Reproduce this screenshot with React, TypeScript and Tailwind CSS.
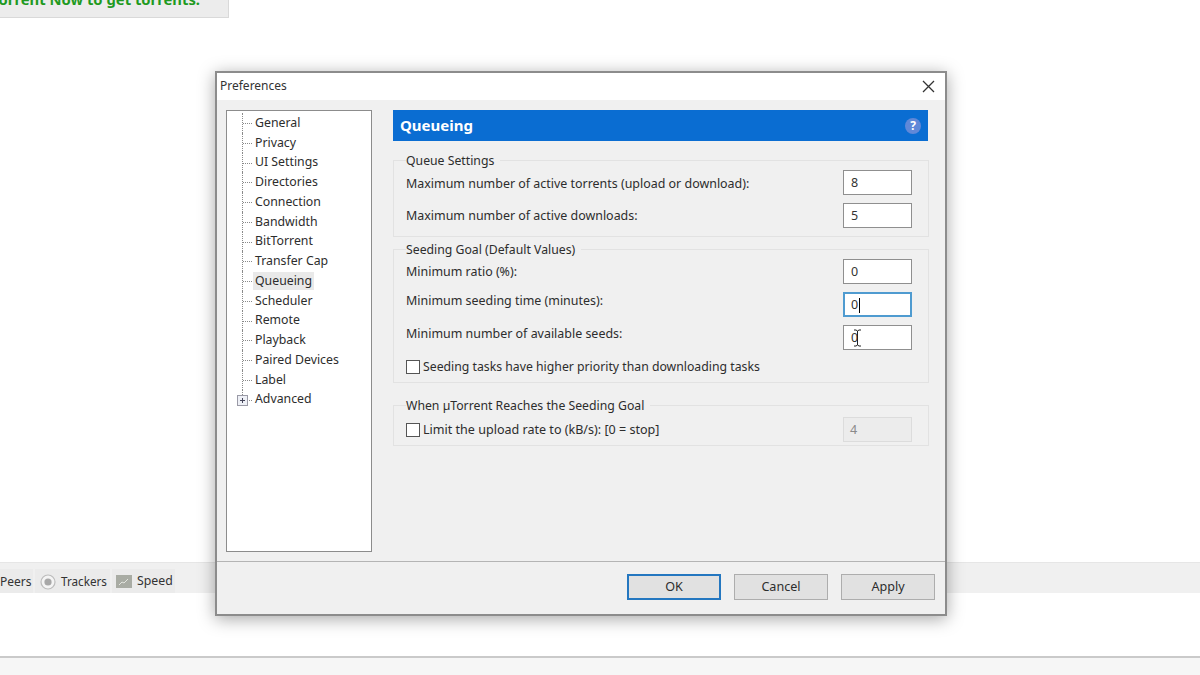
const font = "font-['Noto_Sans','Open_Sans',sans-serif]";

const treeItems = [
  "General",
  "Privacy",
  "UI Settings",
  "Directories",
  "Connection",
  "Bandwidth",
  "BitTorrent",
  "Transfer Cap",
  "Queueing",
  "Scheduler",
  "Remote",
  "Playback",
  "Paired Devices",
  "Label",
  "Advanced",
];

const TreeRow = ({ label, index }: { label: string; index: number }) => {
  const last = index === treeItems.length - 1;
  return (
    <div className="flex h-[19.75px] items-center">
      <div className="relative h-full w-[26px] shrink-0">
        <div className={`absolute left-[15px] top-0 w-px border-l border-dotted border-[#8a8a8a] ${last ? "h-1/2" : "h-full"}`} />
        <div className="absolute left-[16px] top-[10px] w-[9px] border-t border-dotted border-[#8a8a8a]" />
        {last && (
          <svg className="absolute left-[10px] top-[5px]" width="11" height="11" viewBox="0 0 11 11">
            <rect x="0.5" y="0.5" width="10" height="10" fill="#eef0f6" stroke="#9a9aa6" />
            <path d="M3 5.5h5M5.5 3v5" stroke="#45455a" />
          </svg>
        )}
      </div>
      <span className={`px-[2px] text-[12.3px] leading-[18px] text-[#2d2d2d] ${label === "Queueing" ? "bg-[#e9e9e9]" : ""}`}>
        {label}
      </span>
    </div>
  );
};

const ValueBox = ({ value, focused, disabled, children }: { value: string; focused?: boolean; disabled?: boolean; children?: React.ReactNode }) => (
  <div
    className={`relative flex h-[25px] w-[69px] shrink-0 items-center pt-px text-[12.5px] ${
      disabled
        ? "border border-[#dcdcdc] bg-[#ececec] pl-[6px] text-[#8a8a8a]"
        : focused
          ? "border-2 border-[#4f9bd0] bg-white pl-[6px] text-[#333]"
          : "border border-[#8f8f8f] bg-white pl-[7px] text-[#333]"
    }`}
  >
    {value}
    {children}
  </div>
);

const SettingRow = ({ label, labelClass, children }: { label: string; labelClass: string; children: React.ReactNode }) => (
  <div className="flex items-center justify-between pl-[12px] pr-[16px]">
    <span className={`text-[12.45px] text-[#2d2d2d] ${labelClass}`}>{label}</span>
    {children}
  </div>
);

const Check = ({ label, textClass }: { label: string; textClass: string }) => (
  <div className="flex items-center gap-[3px]">
    <div className="h-[14px] w-[14px] shrink-0 border border-[#555] bg-white" />
    <span className={`leading-[18px] text-[#2d2d2d] ${textClass}`}>{label}</span>
  </div>
);

const Group = ({ title, className, children }: { title: string; className: string; children: React.ReactNode }) => (
  <fieldset className={`border border-[#e2e2e2] ${className}`}>
    <legend className="ml-[12px] translate-y-px pr-[6px] text-[12.25px] leading-[16px] text-[#2d2d2d]">{title}</legend>
    {children}
  </fieldset>
);

const DialogButton = ({ label, primary }: { label: string; primary?: boolean }) => (
  <div
    className={`flex h-[26px] w-[94px] items-center justify-center bg-[#e1e1e1] text-[12.6px] text-[#2d2d2d] ${
      primary ? "border-2 border-[#2477c0]" : "border border-[#adadad]"
    }`}
  >
    {label}
  </div>
);

const Preferences = () => (
  <div className="absolute left-[215px] top-[71px] flex h-[545px] w-[732px] flex-col border-2 border-[#8c8c8c] bg-[#f0f0f0] shadow-[0_3px_16px_rgba(0,0,0,0.35)]">
    <div className="flex h-[27px] shrink-0 items-center justify-between bg-white pl-[3px] pr-[10px]">
      <span className="-translate-y-px text-[12px] text-[#333]">Preferences</span>
      <svg width="13" height="13" viewBox="0 0 13 13" stroke="#333" strokeWidth="1.3">
        <path d="M1 1l11 11M12 1L1 12" />
      </svg>
    </div>

    <div className="flex flex-1 pl-[9px] pr-[16px] pt-[10px]">
      <div className="h-[442px] w-[146px] shrink-0 border border-[#8c8c8c] bg-white pt-[2px]">
        {treeItems.map((item, i) => (
          <TreeRow key={item} label={item} index={i} />
        ))}
      </div>

      <div className="ml-[21px] flex-1">
        <div className="mr-px flex h-[31px] items-center justify-between bg-[#0a6dd2] pl-[7px] pr-[7px]">
          <span className="text-[15px] font-bold text-white">Queueing</span>
          <div className="flex h-[16px] w-[16px] items-center justify-center rounded-full bg-[#6088d8] text-[12px] font-bold text-white">?</div>
        </div>

        <Group title="Queue Settings" className="mt-[11px] flex h-[85px] flex-col gap-[8px] pt-[2px]">
          <SettingRow label="Maximum number of active torrents (upload or download):" labelClass="translate-y-[2px]">
            <ValueBox value="8" />
          </SettingRow>
          <SettingRow label="Maximum number of active downloads:" labelClass="translate-y-[1px]">
            <ValueBox value="5" />
          </SettingRow>
        </Group>

        <Group title="Seeding Goal (Default Values)" className="mt-[4px] flex h-[142px] flex-col gap-[8px] pt-[2px]">
          <SettingRow label="Minimum ratio (%):" labelClass="translate-y-[1px]">
            <ValueBox value="0" />
          </SettingRow>
          <SettingRow label="Minimum seeding time (minutes):" labelClass="-translate-y-[3px]">
            <ValueBox value="0" focused>
              <div className="ml-px h-[15px] w-px bg-black" />
            </ValueBox>
          </SettingRow>
          <SettingRow label="Minimum number of available seeds:" labelClass="-translate-y-[3px]">
            <ValueBox value="0">
              <svg className="absolute left-[9px] top-[3px]" width="9" height="18" viewBox="0 0 9 18" fill="none" stroke="#222">
                <path d="M1 1h2l1.5 1L6 1h2M1 17h2l1.5-1L6 17h2M4.5 2v14" />
              </svg>
            </ValueBox>
          </SettingRow>
          <div className="pl-[12px]">
            <Check label="Seeding tasks have higher priority than downloading tasks" textClass="text-[12.25px]" />
          </div>
        </Group>

        <Group title="When µTorrent Reaches the Seeding Goal" className="mt-[14px] h-[49px] pt-[4px]">
          <div className="flex items-center justify-between pl-[12px] pr-[16px]">
            <Check label="Limit the upload rate to (kB/s): [0 = stop]" textClass="text-[12.55px]" />
            <ValueBox value="4" disabled />
          </div>
        </Group>
      </div>
    </div>

    <div className="flex h-[53px] shrink-0 items-start justify-end gap-[13px] border-t border-[#b4b4b4] pr-[10px] pt-[12px]">
      <DialogButton label="OK" primary />
      <DialogButton label="Cancel" />
      <DialogButton label="Apply" />
    </div>
  </div>
);

const BottomTab = ({ label, icon, className }: { label: string; icon?: React.ReactNode; className: string }) => (
  <div className={`flex h-full items-center gap-[5px] bg-[#ebebeb] text-[#333] ${className}`}>
    {icon}
    {label}
  </div>
);

export default function App() {
  return (
    <div className={`relative flex h-[675px] w-[1200px] flex-col overflow-hidden bg-white ${font}`}>
      <div className="flex h-[18px] w-[229px] shrink-0 justify-end overflow-hidden border-b border-r border-[#d9d9d9] bg-[#ececec] pr-[28px]">
        <span className="-mt-[11px] whitespace-nowrap text-[14.8px] font-bold leading-[20px] text-[#1f9a1f]">µTorrent Now to get torrents.</span>
      </div>

      <div className="flex-1" />

      <div className="flex h-[31px] shrink-0 items-start border-t border-[#e6e6e6] bg-[#f0f0f0] pt-[6px]">
        <div className="flex h-[25px] gap-[2px]">
          <BottomTab label="Peers" className="w-[33px] text-[12px]" />
          <BottomTab
            label="Trackers"
            className="w-[75px] pl-[5px] text-[11.7px]"
            icon={
              <svg className="shrink-0" width="16" height="16" viewBox="0 0 16 16">
                <circle cx="8" cy="8" r="7" fill="#f4f4f4" stroke="#bcbcbc" strokeWidth="1.2" />
                <circle cx="8" cy="8" r="3.6" fill="#a8a8a8" />
              </svg>
            }
          />
          <BottomTab
            label="Speed"
            className="w-[63px] pl-[4px] text-[12.3px]"
            icon={
              <svg className="shrink-0" width="16" height="13" viewBox="0 0 16 13">
                <rect width="16" height="13" fill="#a9aca4" />
                <path d="M3 10l3-3 2 1 4-4" fill="none" stroke="#e4e6e0" strokeWidth="1" />
              </svg>
            }
          />
        </div>
      </div>

      <div className="h-[63px] shrink-0 bg-white" />
      <div className="h-[19px] shrink-0 border-t-2 border-[#cacaca] bg-[#f6f6f6]" />

      <Preferences />
    </div>
  );
}
